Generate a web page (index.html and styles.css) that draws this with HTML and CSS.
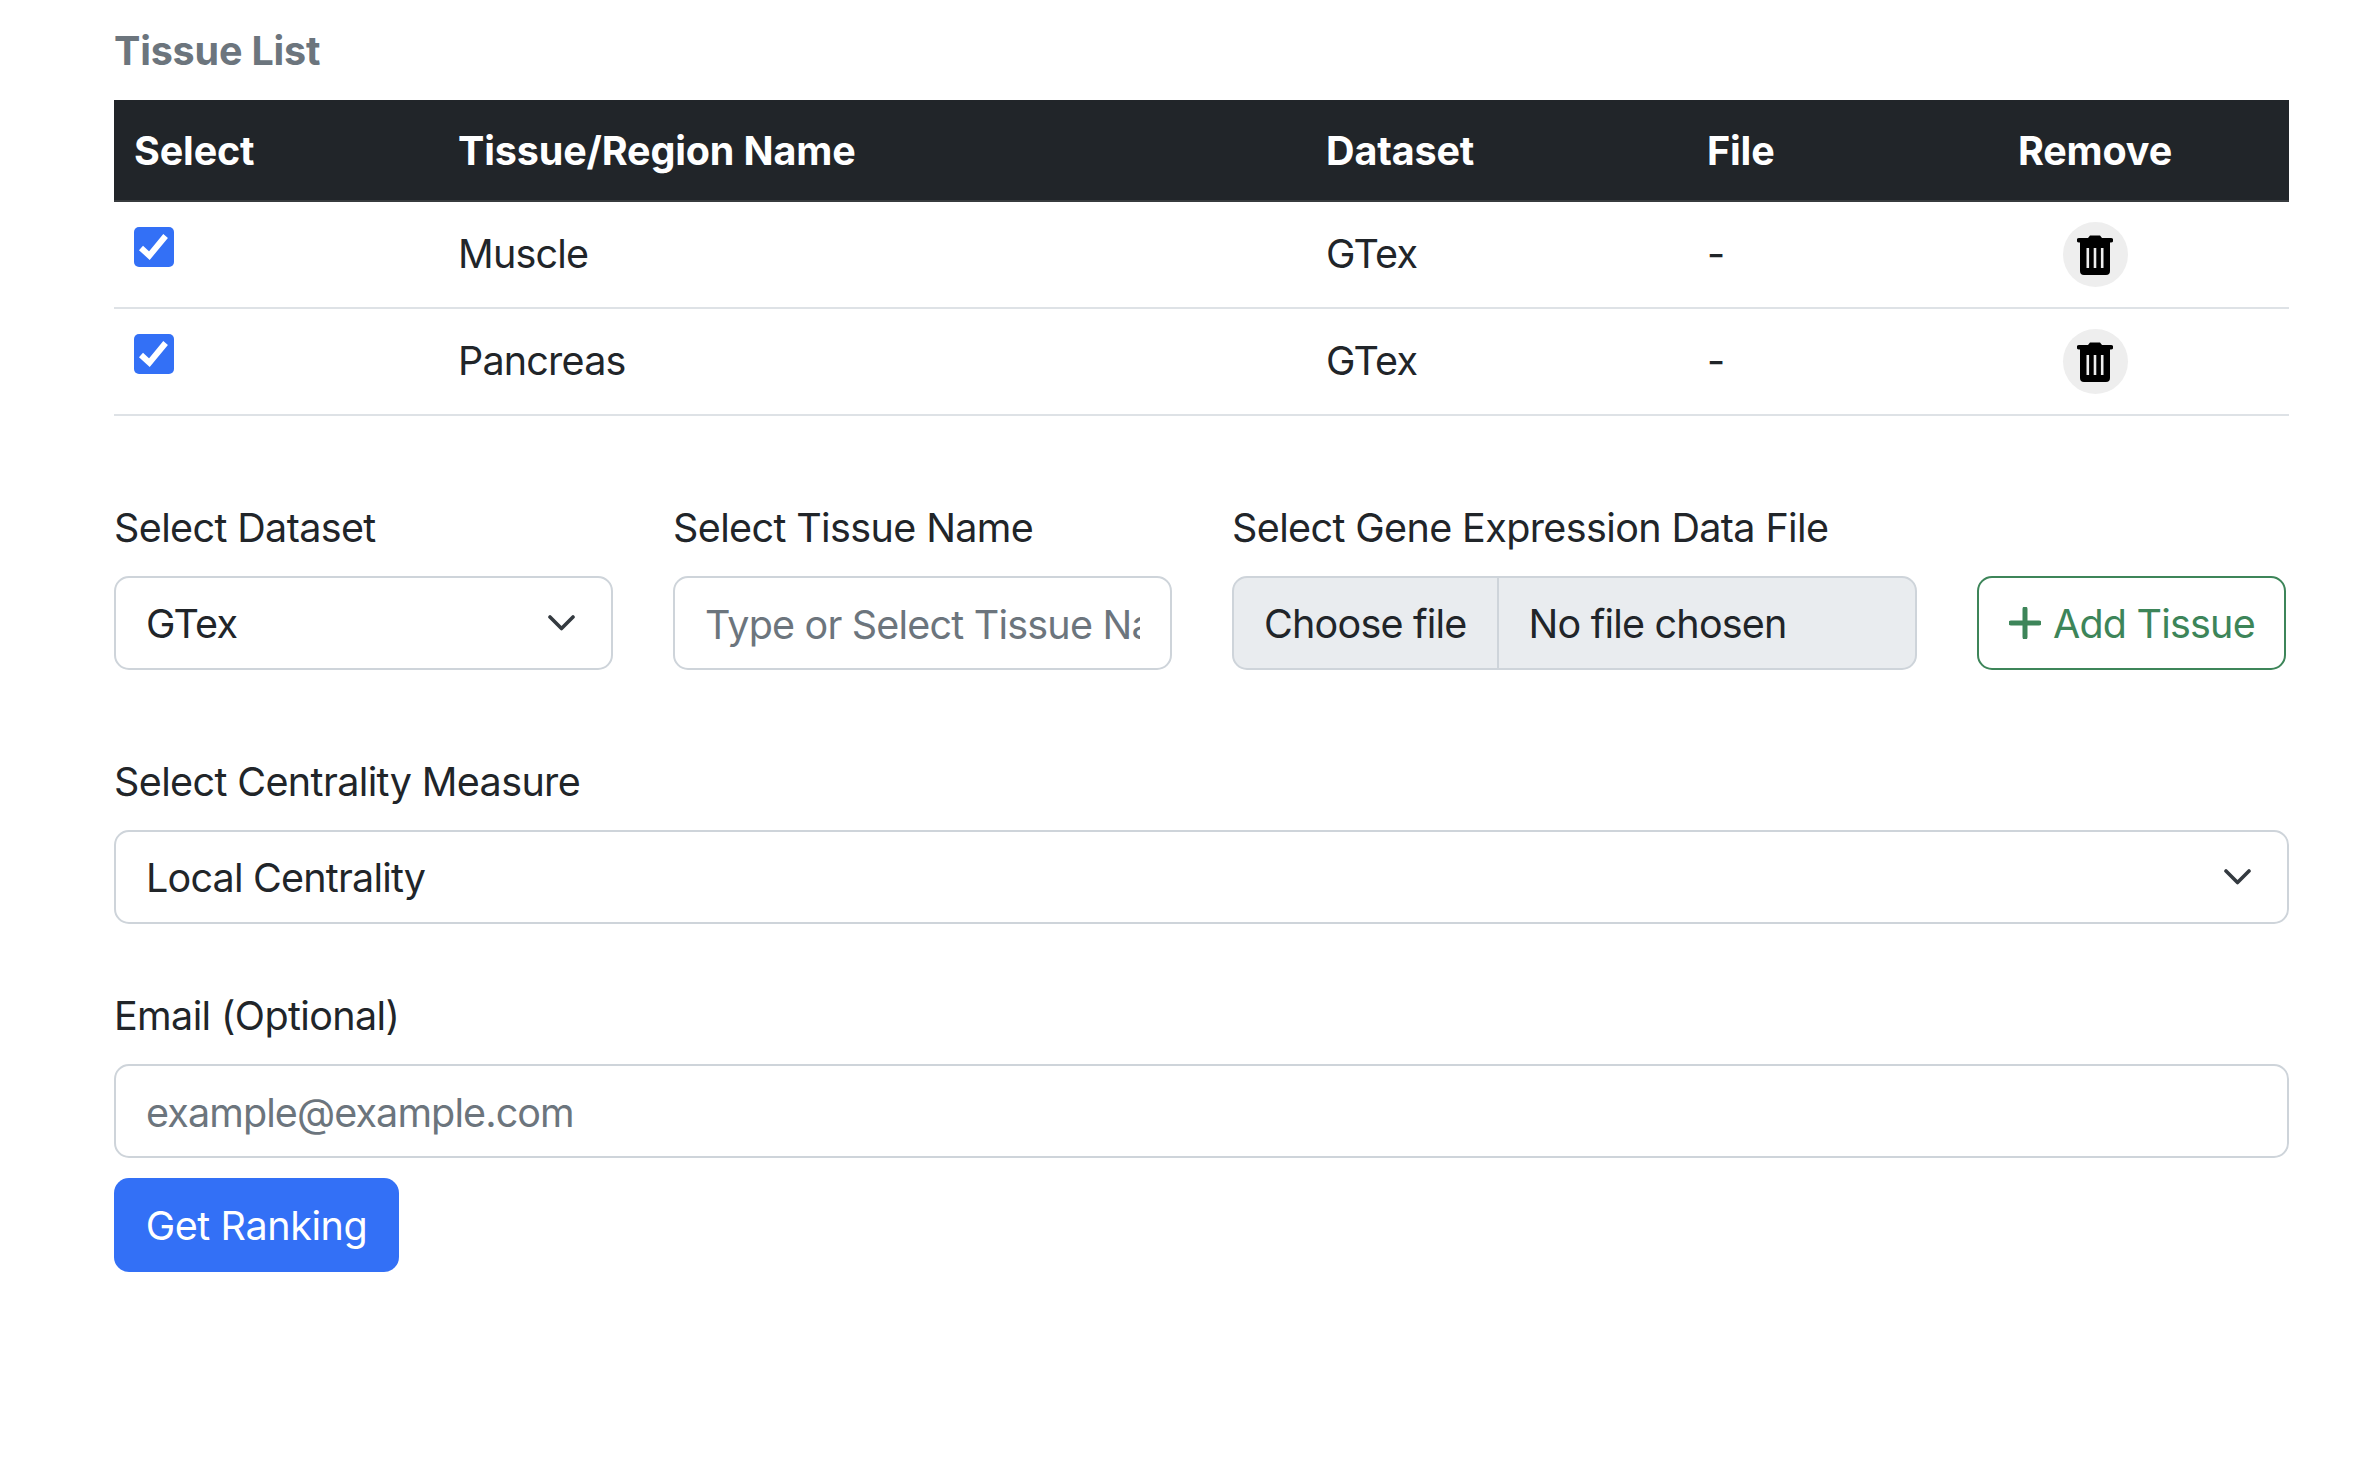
FILE: index.html
```html
<!DOCTYPE html>

<html lang="en">
  <head>
    <meta charset="utf-8">
    <meta name="viewport" content="width=device-width, initial-scale=1.0">

    <title>Tissue List</title>

    <link rel="stylesheet" href="styles.css">
  </head>
  <body>
    <div class="container">
      <h6 class="title">Tissue List</h6>

      <table class="tissue-table">
        <colgroup>
          <col class="col-select">
          <col class="col-name">
          <col class="col-dataset">
          <col class="col-file">
          <col class="col-remove">
        </colgroup>
        <thead>
          <tr>
            <th>Select</th>
            <th>Tissue/Region Name</th>
            <th>Dataset</th>
            <th>File</th>
            <th class="center">Remove</th>
          </tr>
        </thead>
        <tbody>
          <tr>
            <td class="top"><input type="checkbox" class="check" checked></td>
            <td>Muscle</td>
            <td>GTex</td>
            <td>-</td>
            <td class="center">
              <button type="button" class="remove-btn">
                <svg class="trash" viewBox="0 0 36 42"><path fill-rule="evenodd" d="M13 1.500h10l2 2.500h9a2 2 0 0 1 0 4.500H2A2 2 0 0 1 2 4h9zM3 8.500h30V37a4 4 0 0 1-4 4H7a4 4 0 0 1-4-4zM9.500 14v20h2.600V14zM16.700 14v20h2.600V14zM23.900 14v20h2.600V14z"/></svg>
              </button>
            </td>
          </tr>
          <tr>
            <td class="top"><input type="checkbox" class="check" checked></td>
            <td>Pancreas</td>
            <td>GTex</td>
            <td>-</td>
            <td class="center">
              <button type="button" class="remove-btn">
                <svg class="trash" viewBox="0 0 36 42"><path fill-rule="evenodd" d="M13 1.500h10l2 2.500h9a2 2 0 0 1 0 4.500H2A2 2 0 0 1 2 4h9zM3 8.500h30V37a4 4 0 0 1-4 4H7a4 4 0 0 1-4-4zM9.500 14v20h2.600V14zM16.700 14v20h2.600V14zM23.900 14v20h2.600V14z"/></svg>
              </button>
            </td>
          </tr>
        </tbody>
      </table>

      <div class="tissue-form">
        <div class="field">
          <label class="label">Select Dataset</label>
          <select class="control select">
            <option>GTex</option>
          </select>
        </div>
        <div class="field">
          <label class="label">Select Tissue Name</label>
          <input type="text" class="control" placeholder="Type or Select Tissue Name">
        </div>
        <div class="field">
          <label class="label">Select Gene Expression Data File</label>
          <div class="control file">
            <span class="file-btn">Choose file</span>
            <span class="file-name">No file chosen</span>
          </div>
        </div>
        <button type="button" class="add-btn">
          <svg class="plus" viewBox="0 0 32 32"><path d="M16 2v28M2 16h28"/></svg>
          Add Tissue
        </button>
      </div>

      <div class="field centrality">
        <label class="label">Select Centrality Measure</label>
        <select class="control select">
          <option>Local Centrality</option>
        </select>
      </div>

      <div class="field email">
        <label class="label">Email (Optional)</label>
        <input type="email" class="control" placeholder="example@example.com">
      </div>

      <button type="button" class="submit-btn">Get Ranking</button>
    </div>
  </body>
</html>
```

FILE: styles.css
```css
* {
  box-sizing: border-box;
}
body {
  margin: 0;
  background-color: #fff;
  color: #212529;
  font-family: Inter, "Liberation Sans", sans-serif;
  font-size: 39.5px;
  line-height: 59px;
}
.container {
  padding: 22px 75px 0 114px;
}
.title {
  margin: 0 0 19px;
  font-size: 39.5px;
  font-weight: 700;
  line-height: 59px;
  letter-spacing: -0.2px;
  color: #6c757d;
}

.tissue-table {
  width: 100%;
  table-layout: fixed;
  border-collapse: collapse;
}
.col-select { width: 324px; }
.col-name { width: 868px; }
.col-dataset { width: 381px; }
.col-file { width: 214px; }
.col-remove { width: 388px; }
.tissue-table th {
  padding: 22px 20px 19px;
  text-align: left;
  font-weight: 700;
  letter-spacing: -0.15px;
  color: #fff;
  background-color: #212529;
  border-bottom: 2px solid #373b3e;
}
.tissue-table td {
  padding: 20px;
  vertical-align: middle;
  letter-spacing: -0.8px;
  border-bottom: 2px solid #dee2e6;
}
.tissue-table td.top {
  vertical-align: top;
}
.tissue-table .center {
  text-align: center;
}
.check {
  display: block;
  width: 40px;
  height: 40px;
  margin: 5px 0 0;
  border-radius: 5px;
  background-color: #3370f6;
  background-image: url("data:image/svg+xml,%3csvg xmlns='http://www.w3.org/2000/svg' viewBox='0 0 20 20'%3e%3cpath fill='none' stroke='%23fff' stroke-width='3' d='M3.500 10.500L7.700 14.300L15.800 4.500'/%3e%3c/svg%3e");
  background-size: 100% 100%;
  appearance: none;
}
.remove-btn {
  display: block;
  width: 65px;
  height: 65px;
  margin: 0 auto;
  padding: 0;
  border: 0;
  border-radius: 50%;
  background-color: #eee;
}
.trash {
  display: block;
  width: 36px;
  height: 42px;
  margin: 0 auto;
}

.tissue-form {
  display: grid;
  grid-template-columns: 499px 499px 685px 309px;
  column-gap: 60px;
  align-items: end;
  margin-top: 81px;
}
.field {
  display: flex;
  flex-direction: column;
}
.label {
  padding-top: 2px;
  margin-bottom: 18px;
  letter-spacing: -0.62px;
}
.control {
  width: 100%;
  height: 94px;
  padding: 3px 30px 0;
  border: 2px solid #ced4da;
  border-radius: 15px;
  background-color: #fff;
  color: #212529;
  font: inherit;
  letter-spacing: -0.8px;
  outline: none;
}
.control::placeholder {
  color: #6c757d;
  opacity: 1;
}
.select {
  appearance: none;
  background-image: url("data:image/svg+xml,%3csvg xmlns='http://www.w3.org/2000/svg' viewBox='0 0 27 16'%3e%3cpath fill='none' stroke='%23343a40' stroke-linecap='round' stroke-linejoin='round' stroke-width='3.600' d='M2 2l11.500 11.500L25 2'/%3e%3c/svg%3e");
  background-repeat: no-repeat;
  background-position: right 36px center;
  background-size: 27px 16px;
}
.file {
  display: flex;
  padding: 0;
  overflow: hidden;
  background-color: #e9ecef;
  line-height: 93px;
}
.file-btn {
  height: 90px;
  padding: 0 30px;
  border-right: 2px solid #ced4da;
}
.file-name {
  padding-left: 30px;
}
.add-btn {
  display: flex;
  align-items: center;
  gap: 12px;
  height: 94px;
  padding: 3px 0 0 30px;
  border: 2px solid #3d8559;
  border-radius: 15px;
  background-color: #fff;
  color: #3d8559;
  font: inherit;
  letter-spacing: -0.8px;
}
.plus {
  width: 32px;
  height: 32px;
  margin-bottom: 3px;
  fill: none;
  stroke: #3d8559;
  stroke-width: 5;
  stroke-linecap: round;
}

.centrality {
  margin-top: 81px;
}
.email {
  margin-top: 61px;
}
.email .control::placeholder {
  letter-spacing: -0.9px;
}
.submit-btn {
  display: block;
  width: 285px;
  height: 94px;
  margin-top: 20px;
  padding: 3px 0 0;
  border: 0;
  border-radius: 15px;
  background-color: #3370f6;
  color: #fff;
  font: inherit;
  letter-spacing: -0.4px;
}
```
